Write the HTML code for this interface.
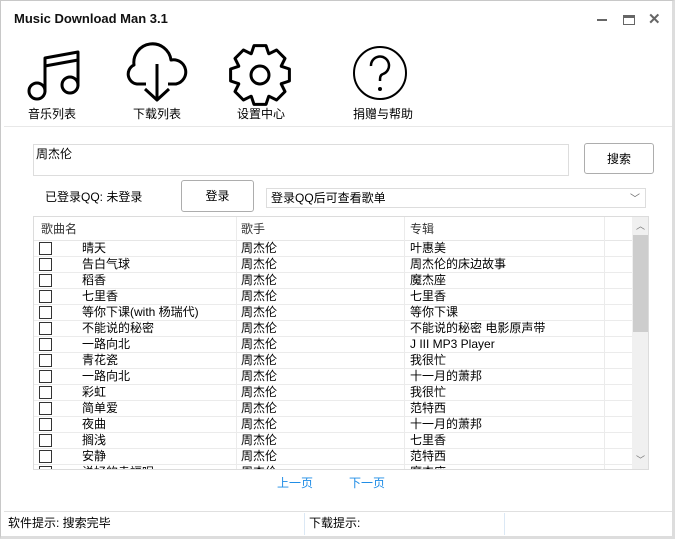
<!DOCTYPE html>
<html><head><meta charset="utf-8"><style>
*{margin:0;padding:0;box-sizing:border-box}
body{width:675px;height:539px;background:#fff;font-family:"Liberation Sans","Noto Sans CJK SC",sans-serif;font-size:12px;color:#000;position:relative;overflow:hidden}
.frame{position:absolute;left:0;top:0;width:675px;height:539px;border:1px solid #c8c8c8;border-right:3px solid #ddd;border-bottom:3px solid #ddd}
.abs{position:absolute;white-space:nowrap}
.lbl{font-size:12px;line-height:14px}
.tbl{position:absolute;left:33px;top:216px;width:616px;height:254px;border:1px solid #dcdcdc;overflow:hidden}
.row{position:absolute;left:0;height:16px;width:598px;border-bottom:1px solid #ebebeb}
.row span{position:absolute;top:0;line-height:15px;font-size:12px}
.cb{position:absolute;left:5px;top:1px;width:13px;height:13px;border:1px solid #333;background:#fff}
.vl{position:absolute;top:0;width:1px;height:254px;background:#ebebeb}
</style></head><body>
<div class="frame"></div>
<div class="abs" style="left:14px;top:11px;font-weight:bold;font-size:13px;color:#111">Music Download Man 3.1</div>
<div class="abs" style="left:597px;top:19px;width:10px;height:2px;background:#666"></div>
<div class="abs" style="left:623px;top:15px;width:12px;height:10px;border:1.5px solid #666;border-top-width:3px"></div>
<div class="abs" style="left:648px;top:10px;font-size:15px;color:#666;font-weight:bold">✕</div>
<svg class="abs" style="left:0;top:0" width="440" height="110" viewBox="0 0 440 110">
<g fill="none" stroke="#000" stroke-width="3" stroke-linejoin="round">
<path d="M45 92V58L78 52V86"/><path d="M45 66L78 60"/>
<circle cx="37" cy="91" r="8"/><circle cx="70" cy="85" r="8"/>
<path d="M146 84H137A10 10 0 0 1 134 65A14 14 0 0 1 171 60A12 12 0 0 1 176 84H168"/>
<path d="M157 64V100M145 89L157 100L169 89"/>
<path id="gear"/>
<circle cx="260" cy="75" r="9"/>
<circle cx="380" cy="73" r="26" stroke-width="2"/>
<path d="M371 66a9 9 0 1 1 12 8c-3 1-3 4-3 7" stroke-width="2.5"/>
</g><circle cx="380" cy="89" r="2"/>
</svg>
<script>
(function(){var cx=260,cy=75,d="",R=30,r=23;for(var k=0;k<8;k++){var a=k*Math.PI/4;var p=[[r,a-0.39],[R,a-0.2],[R,a+0.2],[r,a+0.39]];p.forEach(function(q,i){d+=(k==0&&i==0?"M":"L")+(cx+q[0]*Math.cos(q[1])).toFixed(1)+" "+(cy+q[0]*Math.sin(q[1])).toFixed(1)});}
document.getElementById("gear").setAttribute("d",d+"Z");})();
</script>
<div class="abs lbl" style="left:28px;top:107px">音乐列表</div>
<div class="abs lbl" style="left:133px;top:107px">下载列表</div>
<div class="abs lbl" style="left:237px;top:107px">设置中心</div>
<div class="abs lbl" style="left:353px;top:107px">捐赠与帮助</div>
<div class="abs" style="left:4px;top:126px;width:668px;height:1px;background:#e8e8e8"></div>
<div class="abs" style="left:33px;top:144px;width:536px;height:32px;border:1px solid #ddd"></div>
<div class="abs lbl" style="left:36px;top:147px">周杰伦</div>
<div class="abs" style="left:584px;top:143px;width:70px;height:31px;border:1px solid #adadad;border-radius:3px;background:#fff;text-align:center;line-height:30px">搜索</div>
<div class="abs lbl" style="left:45px;top:190px">已登录QQ: 未登录</div>
<div class="abs" style="left:181px;top:180px;width:73px;height:32px;border:1px solid #adadad;border-radius:3px;text-align:center;line-height:30px">登录</div>
<div class="abs" style="left:266px;top:188px;width:380px;height:20px;border:1px solid #ddd"></div>
<div class="abs lbl" style="left:271px;top:191px">登录QQ后可查看歌单</div>
<div class="abs" style="left:630px;top:190px;color:#666;font-size:10px">﹀</div>
<div class="tbl">
<div class="abs" style="left:0;top:0;width:598px;height:24px;border-bottom:1px solid #e6e6e6"></div>
<div class="vl" style="left:202px"></div><div class="vl" style="left:370px"></div><div class="vl" style="left:570px"></div>
<div class="abs lbl" style="left:7px;top:5px;color:#333">歌曲名</div>
<div class="abs lbl" style="left:207px;top:5px;color:#333">歌手</div>
<div class="abs lbl" style="left:376px;top:5px;color:#333">专辑</div>
<div class="abs" style="left:598px;top:0;width:17px;height:254px;background:#f0f0f0"></div>
<div class="abs" style="left:599px;top:18px;width:15px;height:97px;background:#cdcdcd"></div>
<div class="abs" style="left:602px;top:2px;font-size:9px;color:#777">︿</div>
<div class="abs" style="left:602px;top:236px;font-size:9px;color:#777">﹀</div>
<div id="rows"></div>
</div>
<script>
var d=[["晴天","叶惠美"],["告白气球","周杰伦的床边故事"],["稻香","魔杰座"],["七里香","七里香"],["等你下课(with 杨瑞代)","等你下课"],["不能说的秘密","不能说的秘密 电影原声带"],["一路向北","J III MP3 Player"],["青花瓷","我很忙"],["一路向北","十一月的萧邦"],["彩虹","我很忙"],["简单爱","范特西"],["夜曲","十一月的萧邦"],["搁浅","七里香"],["安静","范特西"],["说好的幸福呢","摩杰座"]];
var h="";d.forEach(function(r,i){h+='<div class="row" style="top:'+(24+i*16)+'px"><div class="cb"></div><span style="left:48px">'+r[0]+'</span><span style="left:207px">周杰伦</span><span style="left:376px">'+r[1]+'</span></div>'});
document.getElementById("rows").innerHTML=h;
</script>
<div class="abs lbl" style="left:277px;top:476px;color:#1e8ce6">上一页</div>
<div class="abs lbl" style="left:349px;top:476px;color:#1e8ce6">下一页</div>
<div class="abs" style="left:4px;top:511px;width:668px;height:1px;background:#e0e0e0"></div>
<div class="abs" style="left:304px;top:513px;width:1px;height:22px;background:#dbe8f5"></div>
<div class="abs" style="left:504px;top:513px;width:1px;height:22px;background:#dbe8f5"></div>
<div class="abs lbl" style="left:8px;top:516px">软件提示: 搜索完毕</div>
<div class="abs lbl" style="left:309px;top:516px">下载提示:</div>
</body></html>
